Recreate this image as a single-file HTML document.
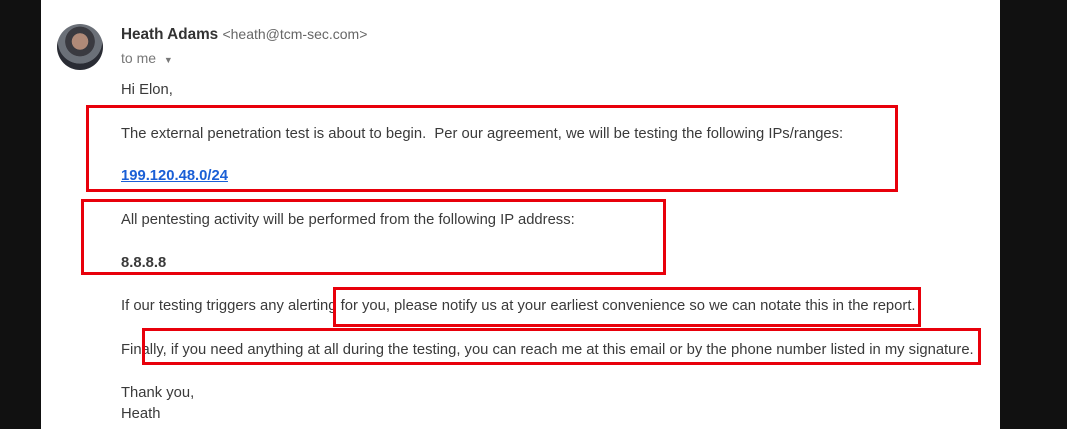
<!DOCTYPE html><html><head><style>
body{margin:0;width:1067px;height:429px;background:#111;position:relative;overflow:hidden;font-family:"Liberation Sans",Arial,sans-serif}
.page{position:absolute;left:41px;top:0;width:959px;height:429px;background:#fff}
.t{position:absolute;left:121px;font-size:14.8px;color:#3a3a3a;white-space:nowrap;line-height:16px}
.box{position:absolute;border:3px solid #e8000b;box-sizing:border-box}
.av{position:absolute;left:57px;top:24px;width:46px;height:46px;border-radius:50%;background:radial-gradient(circle at 50% 38%,#b08a78 0 22%,#3a3a40 23% 40%,#6b7078 41% 60%,#2a2c34 61%)}
</style></head><body>
<div class="page"></div>
<div class="av"></div>
<div class="t" style="top:26px;font-size:15.3px"><b style="color:#333">Heath Adams</b> <span style="font-size:14px;color:#666">&lt;heath@tcm-sec.com&gt;</span></div>
<div class="t" style="top:50px;color:#777;font-size:14px">to me <span style="font-size:9px;margin-left:4px">▼</span></div>
<div class="t" style="top:82px">Hi Elon,</div>
<div class="t" style="top:126px">The external penetration test is about to begin.&nbsp; Per our agreement, we will be testing the following IPs/ranges:</div>
<div class="t" style="top:168px;color:#1a5fd6;font-weight:bold;text-decoration:underline">199.120.48.0/24</div>
<div class="t" style="top:212px">All pentesting activity will be performed from the following IP address:</div>
<div class="t" style="top:255px;font-weight:bold">8.8.8.8</div>
<div class="t" style="top:298px">If our testing triggers any alerting for you, please notify us at your earliest convenience so we can notate this in the report.</div>
<div class="t" style="top:342px">Finally, if you need anything at all during the testing, you can reach me at this email or by the phone number listed in my signature.</div>
<div class="t" style="top:385px">Thank you,</div>
<div class="t" style="top:406px">Heath</div>
<div class="box" style="left:86px;top:105px;width:812px;height:87px"></div>
<div class="box" style="left:81px;top:199px;width:585px;height:76px"></div>
<div class="box" style="left:333px;top:287px;width:588px;height:40px"></div>
<div class="box" style="left:142px;top:328px;width:839px;height:37px"></div>
</body></html>
